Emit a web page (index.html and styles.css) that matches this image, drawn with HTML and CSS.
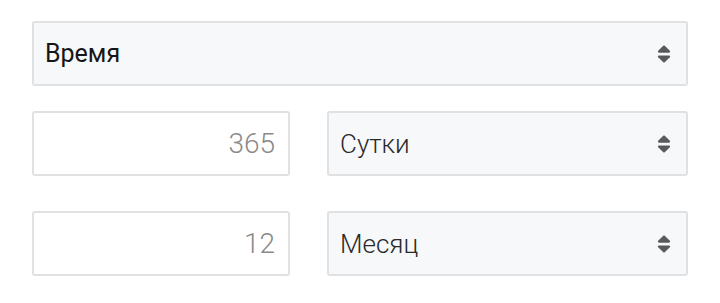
FILE: index.html
```html
<!DOCTYPE html>
<html lang="ru">
<head>
<meta charset="utf-8">
<title>Форма</title>
<link rel="stylesheet" href="styles.css">
</head>
<body>
<div class="form">
  <div class="select select-main">
    <span class="label">Время</span>
    <svg class="sort" viewBox="0 0 320 512" aria-hidden="true"><path d="M41 288h238c21.4 0 32.1 25.9 17 41L177 448c-9.4 9.4-24.6 9.4-33.9 0L24 329c-15.1-15.1-4.4-41 17-41zm255-105L177 64c-9.4-9.4-24.6-9.4-33.9 0L24 183c-15.1 15.1-4.4 41 17 41h238c21.4 0 32.1-25.9 17-41z"/></svg>
  </div>
  <div class="row">
    <div class="input">365</div>
    <div class="select">
      <span class="label light">Сутки</span>
      <svg class="sort" viewBox="0 0 320 512" aria-hidden="true"><path d="M41 288h238c21.4 0 32.1 25.9 17 41L177 448c-9.4 9.4-24.6 9.4-33.9 0L24 329c-15.1-15.1-4.4-41 17-41zm255-105L177 64c-9.4-9.4-24.6-9.4-33.9 0L24 183c-15.1 15.1-4.4 41 17 41h238c21.4 0 32.1-25.9 17-41z"/></svg>
    </div>
  </div>
  <div class="row row-last">
    <div class="input">12</div>
    <div class="select">
      <span class="label light">Месяц</span>
      <svg class="sort" viewBox="0 0 320 512" aria-hidden="true"><path d="M41 288h238c21.4 0 32.1 25.9 17 41L177 448c-9.4 9.4-24.6 9.4-33.9 0L24 329c-15.1-15.1-4.4-41 17-41zm255-105L177 64c-9.4-9.4-24.6-9.4-33.9 0L24 183c-15.1 15.1-4.4 41 17 41h238c21.4 0 32.1-25.9 17-41z"/></svg>
    </div>
  </div>
</div>
</body>
</html>
```
FILE: styles.css
```css
html, body {
  margin: 0;
  background: #ffffff;
}
body {
  font-family: Roboto, "Noto Sans", "Liberation Sans", sans-serif;
}
.form {
  width: 656px;
  padding: 21px 32px 0;
}
.select,
.input {
  box-sizing: border-box;
  border: 2px solid #e0e1e2;
  border-radius: 3px;
  display: flex;
  align-items: center;
}
.select {
  background: #f7f8fa;
  padding: 0 15px 0 11px;
  justify-content: space-between;
}
.select-main {
  height: 65px;
}
.label {
  font-size: 25px;
  font-weight: 400;
  color: #161616;
}
.label.light {
  font-size: 26px;
  font-weight: 300;
  color: #2a2a2a;
}
.sort {
  width: 14px;
  height: 22px;
  fill: #5a5a5a;
}
.row {
  display: grid;
  grid-template-columns: 258px 1fr;
  column-gap: 37px;
  height: 65px;
  margin-top: 25px;
}
.row-last {
  margin-top: 35px;
}
.input {
  background: #ffffff;
  justify-content: flex-end;
  padding: 0 13px;
  font-size: 28px;
  font-weight: 300;
  color: #8a8a8a;
}
```
